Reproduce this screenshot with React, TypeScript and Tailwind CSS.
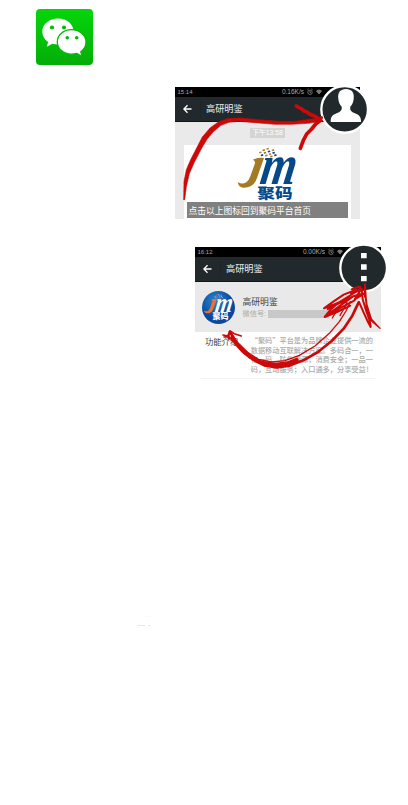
import React from "react";

const FONT = "font-['Liberation_Sans','Noto_Sans_CJK_SC',sans-serif]";

function WeChatIcon() {
  return (
    <svg className="ml-9 mt-[9px] block h-[56px] w-[57px] shrink-0" viewBox="0 0 57 56">
      <defs>
        <linearGradient id="wg" x1="0" y1="0" x2="0" y2="1">
          <stop offset="0" stopColor="#05d60a" />
          <stop offset="1" stopColor="#04ad08" />
        </linearGradient>
      </defs>
      <rect width="57" height="56" rx="4" fill="url(#wg)" />
      <path d="M22 9.5c-9 0-15.7 6-15.7 13.2 0 4.3 2.2 7.8 5.8 10.3l-1.3 4.8 5.6-3c1.7.5 3.6.8 5.6.8C31 35.6 37.500 30 37.500 22.700S31 9.500 22 9.500z" fill="#fff" />
      <circle cx="16" cy="18.500" r="2.100" fill="#05bd09" />
      <circle cx="28" cy="18.500" r="2.100" fill="#05bd09" />
      <path d="M35.500 20.700c-8 0-14.200 5.400-14.200 12.200s6.200 12.300 14.200 12.300c1.900 0 3.600-.3 5.200-.8l5.300 2.800-1.200-4.500c3.200-2.200 5.200-5.600 5.200-9.700 0-6.700-6.500-12.300-14.500-12.300z" fill="#fff" stroke="#05b909" strokeWidth="1.300" />
      <circle cx="31.300" cy="28.800" r="1.800" fill="#05b909" />
      <circle cx="40.700" cy="28.800" r="1.800" fill="#05b909" />
    </svg>
  );
}

function PhoneHeader({ time, speed }: { time: string; speed: string }) {
  return (
    <>
      <div className="flex h-[10px] items-center bg-black pl-[2.500px] text-[6.500px] leading-none text-[#aaaaaa]">
        <span className="text-[6px]">{time}</span>
        <span className="ml-auto">{speed}</span>
        <svg className="ml-[3px] mr-[29px] h-[8px] w-[24px]" viewBox="0 0 24 8" fill="none" stroke="#888" strokeWidth=".8">
          <circle cx="3" cy="4.300" r="2.200" />
          <path d="M3 3v1.500h1M.4 1.800 1.700.8M4.300.8l1.300 1" />
          <path d="M9.500 3q2.500-2.200 5 0L12 6z" fill="#777" />
          <path d="M18 6.500h1M20 6v-1" />
        </svg>
      </div>
      <div className="flex h-[25px] items-center border-b border-[#101618] bg-[#22292c] text-[9.200px] leading-none text-[#eee]">
        <svg className="ml-[8px] h-[10px] w-[9px]" viewBox="0 0 9 10" fill="none" stroke="#fff" strokeWidth="1.300">
          <path d="M8.500 5H1M4.500 1.300.9 5l3.600 3.700" />
        </svg>
        <span className="ml-[8px] h-[17px] w-px bg-[#1e2528]" />
        <span className="ml-[5px] pt-[2px]">高研明鉴</span>
      </div>
    </>
  );
}

const DOTS = [
  [252, 210], [262, 203], [274, 199], [257, 218], [266, 211], [278, 207], [290, 203],
  [270, 219], [281, 215], [292, 211], [285, 222], [297, 218],
];

function Mark({ pale = false }: { pale?: boolean }) {
  const blue = pale ? "#ffffff" : "#07488a";
  const gold = pale ? "#f07030" : "#a47a25";
  return (
    <>
      {DOTS.map(([x, y], i) => (
        <rect key={i} x={x} y={y} width="7" height="5" fill={i % 3 === 1 ? gold : pale ? "#9cc4ec" : i % 2 ? blue : "#ad8a42"} transform={`rotate(-15 ${x} ${y})`} />
      ))}
      <path d="M234 233Q250 226 267 228L246 288Q236 318 204 317Q190 315 188 300Q201 309 214 301Q222 295 226 283L240 244Q241 236 234 233Z" fill={gold} />
      <text x="0" y="0" transform="translate(251 307) skewX(-9)" fontSize="170" fontWeight="700" fontStyle="italic" textLength="107" lengthAdjust="spacingAndGlyphs" fill={blue} className="font-['Liberation_Serif',serif]">m</text>
    </>
  );
}

function BrandMark() {
  return (
    <svg className="h-[53px] w-[64px] overflow-visible" viewBox="180 195 192 159">
      <Mark />
      <text x="247" y="347" fontSize="42" fontWeight="900" textLength="106" lengthAdjust="spacingAndGlyphs" fill="#07488a" className="font-['Noto_Sans_CJK_SC',sans-serif]">聚码</text>
    </svg>
  );
}

function RoundMark() {
  return (
    <svg className="h-[33px] w-[33px] shrink-0 overflow-visible" viewBox="0 0 33 33">
      <defs>
        <radialGradient id="bg" cx=".4" cy=".3">
          <stop offset="0" stopColor="#2589ce" />
          <stop offset="1" stopColor="#0a48a0" />
        </radialGradient>
      </defs>
      <circle cx="16.500" cy="16.500" r="16.500" fill="url(#bg)" />
      <g transform="translate(-28.500 -29) scale(.162)">
        <Mark pale />
      </g>
      <text x="10.500" y="28" fontSize="7.500" fontWeight="900" textLength="16" lengthAdjust="spacingAndGlyphs" fill="#fff" className="font-['Noto_Sans_CJK_SC',sans-serif]">聚码</text>
    </svg>
  );
}

function ChatPanel() {
  return (
    <section className="relative ml-[175px] mt-[22px] h-[132px] w-[185px] shrink-0 bg-[#eaeaea]">
      <PhoneHeader time="15:14" speed="0.16K/s" />
      <div className="ml-[75px] mt-[6px] flex h-[10px] w-[35px] items-center justify-center rounded-[1px] bg-[#d4d4d4] text-[6.800px] leading-none whitespace-nowrap text-white">下午13:58</div>
      <div className="ml-[9px] mt-[7px] flex h-[74px] w-[167px] flex-col bg-white">
        <div className="ml-[51px] mt-[2px] h-[55px]"><BrandMark /></div>
        <div className="mx-[3px] flex h-[16px] shrink-0 items-center bg-[#808080] pl-[1.500px] pt-[2px] text-[8.750px] leading-[14px] whitespace-nowrap text-white">点击以上图标回到聚码平台首页</div>
      </div>
      <svg className="absolute left-0 top-[-5px] h-[140px] w-[200px]" viewBox="0 0 600 420" fill="none" stroke="#cc0808" strokeLinecap="round" strokeLinejoin="round">
        <path d="M26 353L27 298L34 263L46 235L66 196L82 165L105 138L130 120L158 110L195 108L250 113L310 118L360 118L405 112L440 107L438 118L400 124L350 127L300 127L240 122L190 118L162 121L138 130L115 149L96 172L80 199L58 241L43 275L34 315L29 353Z" fill="#cc0808" strokeWidth="2" strokeDasharray="5 3" />
        <path d="M364 72l8 5 7 3 8 7 9 3 9 7 11 4 13 7" strokeWidth="11" />
        <path d="M438 114l-16 12-12 15-15 15-10 19-9 24" strokeWidth="11" />
      </svg>
      <svg className="absolute left-0 top-[-5px] h-[140px] w-[200px]" viewBox="0 0 600 420">
        <circle cx="509" cy="82" r="70" fill="#22292c" stroke="#fff" strokeWidth="7" />
        <path d="M513 21C496 21 487 32 490 51C491 62 495 68 500 74C502 84 496 89 485 94C472 99 467 104 467 120H558C558 104 552 99 540 94C529 89 524 84 526 74C531 68 535 62 536 51C539 32 530 21 513 21Z" fill="#fff" />
        <path d="M431 115l9-8" stroke="#cc0808" strokeWidth="9" strokeLinecap="round" />
      </svg>
    </section>
  );
}

function ProfilePanel() {
  return (
    <section className="relative ml-[195px] mt-[28px] h-[132px] w-[186px] shrink-0 bg-white">
      <PhoneHeader time="16:12" speed="0.00K/s" />
      <div className="flex h-[50px] bg-[#e9e9e9] pl-[6.500px] pt-[9px]">
        <RoundMark />
        <div className="ml-[8px] pt-[7px] leading-none">
          <div className="text-[8.800px] text-[#444]">高研明鉴</div>
          <div className="mt-[3px] flex items-center text-[7.200px] text-[#aaa]">
            <span>微信号:</span><span className="ml-[2px] h-[8px] w-[61px] bg-[#c8c8c8]" />
          </div>
        </div>
      </div>
      <div className="ml-[6px] mr-[6px] flex h-[47px] border-b border-[#f3f3f3]">
        <div className="ml-[4px] pt-[5px] text-[8.300px] leading-[10px] whitespace-nowrap text-[#444]">功能介绍</div>
        <div className="ml-[12.500px] pt-[4px] font-['Noto_Sans_CJK_SC',sans-serif] text-[7.200px] leading-[9.600px] font-medium whitespace-nowrap text-[#aaa]">
          <div>“聚码”平台是为品牌企业提供一流的</div>
          <div>数据移动互联解决方案。多码合一，一</div>
          <div>物一码，防伪溯源，消费安全；一品一</div>
          <div>码，互动服务；入口通多，分享受益！</div>
        </div>
      </div>
      <svg className="absolute left-0 top-[-7px] h-[142px] w-[200px]" viewBox="0 0 600 426">
        <circle cx="506" cy="84" r="70" fill="#22292c" stroke="#fff" strokeWidth="7" />
        <path d="M498 39h17v16h-17zM498 73h17v16h-17zM498 108h17v16h-17z" fill="#fff" />
        <g fill="none" stroke="#cc0808" strokeLinecap="round" strokeLinejoin="round">
          <path d="M105 276L117 296L126 312L148 338L178 361L208 376L245 382L282 377L325 361L369 336L410 303L446 266L472 227L491 187" strokeWidth="8" />
          <path d="M105 276L130 310L158 337L190 358L230 366L270 362L313 346L360 318L403 280L433 245L453 213L466 185" strokeWidth="4" />
          <path d="M112 292L124 311L144 333L168 352L200 368L240 374L278 370L305 360" strokeWidth="12" />
          <path d="M105 273L118 281L139 288M104 274L98 288M84 285L100 288L114 304M87 291l15-1 11 13M103 280l-3 17 18-1" strokeWidth="5" />
          <path d="M482 150L446 164L416 184L387 205L432 187L406 210L389 231L426 216L466 197M482 156L421 194L398 207L474 169L398 224L479 181" strokeWidth="6" />
          <path d="M500 148L503 178L513 211L524 241L527 261L519 246L507 220L492 186M510 137L512 172L517 211L528 239" strokeWidth="6" />
          <path d="M517 198L529 237L555 265L527 241" strokeWidth="4" />
          <path d="M435 227l11-20 10-20M412 234l17-29" strokeWidth="4" />
          <path d="M510 133v37M504 151l-34-3 21-8 11 9-34 11 31-13-20 31 30-18-32 8M495 140l-5 30" strokeWidth="6" />
        </g>
      </svg>
    </section>
  );
}

export default function App() {
  return (
    <main className={`flex h-[805px] w-[408px] flex-col overflow-hidden bg-white ${FONT}`}>
      <WeChatIcon />
      <ChatPanel />
      <ProfilePanel />
      <svg className="ml-[136px] mt-[236px] h-[13px] w-[17px]" viewBox="0 0 17 13" stroke="#dedede" strokeWidth=".8">
        <path d="M2 10.500h7M12 10.500h2" /><path d="M10 1v1M13 1v1" opacity=".5" />
      </svg>
    </main>
  );
}
